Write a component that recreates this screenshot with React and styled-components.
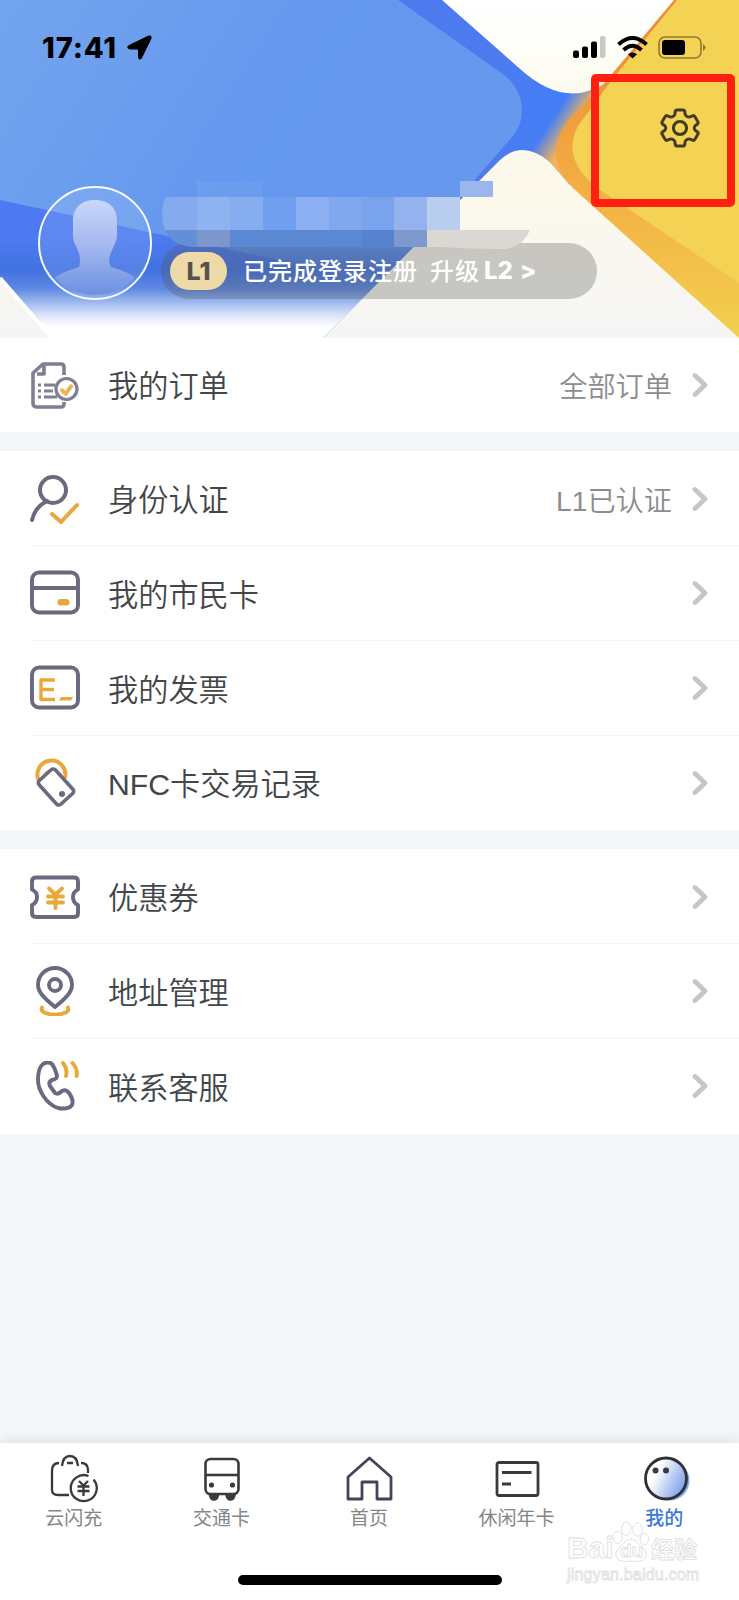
import React from 'react';
import styled, {createGlobalStyle} from 'styled-components';


const GlobalStyle = createGlobalStyle`
    * {
      box-sizing: border-box;
    }
    body {
      margin: 0;
      background: #f5f6f8;
      font-family: "Liberation Sans", "Noto Sans CJK SC", sans-serif;
    }
`;

const GREY = '#69697f';
const ORANGE = '#e8a83c';
const DARK = '#3a3a3c';


/* header artwork */

const HeaderArt = () => (
    <Art viewBox="0 0 739 338">
      <defs>
        <linearGradient id="paper" x1="0" y1="0" x2="0" y2="1">
          <stop offset="0" stopColor="#ffffff" />
          <stop offset=".3" stopColor="#fdfbee" />
          <stop offset=".6" stopColor="#fbf8eb" />
          <stop offset="1" stopColor="#f5f5f5" />
        </linearGradient>
        <linearGradient id="deep" x1="0" y1="0" x2="1" y2="0">
          <stop offset="0" stopColor="#4d7af0" />
          <stop offset=".8" stopColor="#4d7bef" />
          <stop offset=".92" stopColor="#417ffb" />
          <stop offset="1" stopColor="#4282f8" />
        </linearGradient>
        <linearGradient id="sky" x1="0" y1="0" x2="1" y2=".35">
          <stop offset="0" stopColor="#73a5ee" />
          <stop offset=".6" stopColor="#6497ee" />
          <stop offset="1" stopColor="#6698ee" />
        </linearGradient>
        <linearGradient id="fade" x1="0" y1="0" x2="0" y2="1">
          <stop offset="0" stopColor="#3c6fe0" stopOpacity="0" />
          <stop offset=".3" stopColor="#3f70dd" stopOpacity=".8" />
          <stop offset=".5" stopColor="#5f8ae2" />
          <stop offset=".75" stopColor="#d3dff7" />
          <stop offset=".88" stopColor="#ffffff" />
        </linearGradient>
        <linearGradient id="orange" x1="0" y1="0" x2="0" y2="1">
          <stop offset="0" stopColor="#ef8a35" />
          <stop offset=".3" stopColor="#f09a3c" />
          <stop offset=".6" stopColor="#f3b245" />
          <stop offset="1" stopColor="#f2d04e" />
        </linearGradient>
        <linearGradient id="glow" gradientUnits="userSpaceOnUse" x1="546" y1="128" x2="566" y2="141">
          <stop offset="0" stopColor="#f3b45a" stopOpacity="0" />
          <stop offset="1" stopColor="#f3b45a" />
        </linearGradient>
        <clipPath id="deepClip">
          <path d="M0 0H442L519 68Q567 112 610 80L570 185L550 162Q522 139 500 160L323 338H52L0 278Z" />
        </clipPath>
      </defs>
      <rect width="739" height="338" fill="url(#paper)" />
      <g clipPath="url(#deepClip)">
        <rect width="620" height="338" fill="url(#deep)" />
        <path d="M0 0H398L500 72Q526 90 521 120Q518 132 504 146L474 181L390 284L0 200Z" fill="url(#sky)" />
        <rect y="240" width="480" height="98" fill="url(#fade)" />
        <path d="M525 180V110L600 70L615 80V200Z" fill="url(#glow)" />
      </g>
      <path d="M0 278L52 338" stroke="#fff" strokeWidth="4" />
      <path d="M674 0H739V338L574 189Q540 155 570 118Q585 104 606 81Z" fill="url(#orange)" />
      <path d="M677 0H739V283L600 190Q560 160 578 126L611 81Z" fill="#f4d254" />
    </Art>
);

const tiles = [
    [197, 181, 66, 16, '#fff', .05],
    [460, 181, 33, 16, '#9bb5ed', 1],
    [160, 197, 37, 33, '#86aaee', 1],
    [197, 197, 33, 33, '#8fb3f0', 1],
    [230, 197, 33, 33, '#86adf0', 1],
    [263, 197, 33, 33, '#719ff0', 1],
    [296, 197, 33, 33, '#8cb0f1', 1],
    [329, 197, 33, 33, '#7fa8ef', 1],
    [362, 197, 32, 33, '#79a3ed', 1],
    [394, 197, 33, 33, '#94b3ee', 1],
    [427, 197, 33, 33, '#b9cdee', 1],
    [160, 230, 37, 17, '#648fd7', 1],
    [197, 230, 33, 17, '#7c97cc', 1],
    [230, 230, 132, 17, '#5a88d3', 1],
    [362, 230, 32, 17, '#5583cf', 1],
    [394, 230, 33, 17, '#7d99cd', 1],
    [427, 230, 110, 20, '#d9d8d3', 1],
];

const NameMosaic = () => (
    <Mosaic viewBox="160 181 378 70">
      <clipPath id="name">
        <path d="M193 181H538L530 230Q521 250 500 249Q470 249 440 247H192Q162 244 162 214Q163 182 193 181Z" />
      </clipPath>
      <g clipPath="url(#name)">
        {tiles.map(([x, y, w, h, fill, opacity]) =>
          <rect key={x + '-' + y} x={x} y={y} width={w} height={h} fill={fill} opacity={opacity} />
        )}
      </g>
    </Mosaic>
);

const Avatar = () => (
    <AvatarSvg viewBox="0 0 114 114">
      <defs>
        <linearGradient id="person" x1="0" y1="0" x2="0" y2="1">
          <stop offset="0" stopColor="#c9d6f8" />
          <stop offset=".5" stopColor="#a3b7ee" />
          <stop offset="1" stopColor="#6d90e0" />
        </linearGradient>
      </defs>
      <circle cx="57" cy="57" r="56" fill="#fff" fillOpacity=".1" />
      <path d="M57 14C73 14 80 24 79 38C79 50 80 52 75 62C71 70 70 76 73 81C82 84 91 86 97 92A56 56 0 0 1 17 92C23 86 33 84 41 81C43 74 42 68 38 60C34 54 35 48 35 38C34 22 43 14 57 14Z" fill="url(#person)" />
      <circle cx="57" cy="57" r="56" fill="none" stroke="#f4fbff" strokeWidth="2" />
    </AvatarSvg>
);

const GearIcon = () => (
    <Gear viewBox="0 0 40 40" fill="none" stroke="#403c22" strokeWidth="3" strokeLinejoin="round">
      <path d="M16.500 2H23.500Q24.500 2 24.800 3.500L25 6Q25.300 7.500 27 8.500Q28.500 9.300 30 8.800L32.500 7.800Q34 7.200 34.800 8.500L38 14Q38.500 15.200 37.500 16L35.500 17.500Q34.300 18.500 34.300 20Q34.300 21.500 35.500 22.500L37.500 24Q38.500 24.800 38 26L34.800 31.500Q34 32.800 32.500 32.200L30 31.200Q28.500 30.700 27 31.500Q25.300 32.500 25 34L24.800 36.500Q24.500 38 23.500 38H16.500Q15.500 38 15.200 36.500L15 34Q14.700 32.500 13 31.500Q11.500 30.700 10 31.200L7.500 32.200Q6 32.800 5.200 31.500L2 26Q1.500 24.800 2.500 24L4.500 22.500Q5.700 21.500 5.700 20Q5.700 18.500 4.500 17.500L2.500 16Q1.500 15.200 2 14L5.200 8.500Q6 7.200 7.500 7.800L10 8.800Q11.500 9.300 13 8.500Q14.700 7.500 15 6L15.200 3.500Q15.500 2 16.500 2Z" />
      <circle cx="20" cy="20" r="6.600" />
    </Gear>
);


/* row icons */

const icons = {
    order: <g opacity=".85">
      <path d="M34 15V7Q34 4 31 4H13L3 13V43Q3 47 7 47H31Q34 47 34 44V42M14 5V14H7" stroke={GREY} strokeWidth="3.600" />
      <path d="M8 25H11M14 25H25M8 31H11M14 31H23M8 37H11M14 37H27" stroke={GREY} strokeWidth="3.200" />
      <circle cx="36.500" cy="29" r="10.5" stroke={GREY} strokeWidth="3.200" />
      <path d="M31 29L35.500 34L42 25" stroke={ORANGE} />
    </g>,
    identity: <g>
      <circle cx="23" cy="16" r="13" stroke={GREY} strokeWidth="4" />
      <path d="M17 27Q5 33 2 46" stroke={GREY} strokeWidth="4" strokeLinecap="round" />
      <path d="M22 40L31 48L47 31" stroke={ORANGE} strokeWidth="4" strokeLinecap="round" />
    </g>,
    card: <g>
      <rect x="2" y="4.500" width="46" height="40" rx="7" stroke={GREY} />
      <path d="M2 20H48" stroke={GREY} />
      <rect x="27.500" y="31" width="12" height="6.5" rx="3" fill={ORANGE} />
    </g>,
    invoice: <g>
      <rect x="2" y="4.500" width="46" height="40" rx="7" stroke={GREY} />
      <path d="M25 17H11V36.500H25M11 26.500H24" stroke={ORANGE} strokeWidth="3.400" />
      <path d="M31 34H43L41 37.500H29Z" fill={ORANGE} />
    </g>,
    nfc: <g>
      <path d="M9 23A14 14 0 1 1 35 20" stroke={ORANGE} strokeWidth="4" />
      <path d="M14 19A8.5 8.5 0 0 1 28 15" stroke={ORANGE} strokeWidth="3" />
      <rect x="-16" y="-11" width="32" height="22" rx="3" transform="translate(26 29) rotate(48)" fill="#fff" stroke={GREY} strokeWidth="3.600" />
      <circle cx="32" cy="36" r="3" fill={GREY} />
    </g>,
    coupon: <g>
      <path d="M6 5.500H44Q48 5.500 48 9.500V17.500A8.5 8.5 0 0 0 48 33V41Q48 45 44 45H6Q2 45 2 41V33A8.5 8.5 0 0 0 2 17.500V9.500Q2 5.500 6 5.500Z" stroke={GREY} />
      <path d="M19 16.500L25.500 22.500L32 16.500M18 24.500H33M18 30.500H33M25.500 22.500V36" stroke={ORANGE} strokeLinecap="round" />
    </g>,
    address: <g>
      <path d="M25 41C14 32 8 26 8 19A17 17 0 0 1 42 19C42 26 36 32 25 41Z" stroke={GREY} />
      <circle cx="25" cy="19" r="6" stroke={GREY} />
      <path d="M12 41.500C8 51 42 51 38 41.500" stroke={ORANGE} strokeLinecap="round" />
    </g>,
    service: <g>
      <path d="M13 3Q18 0 22 3Q25 7 27 15Q27 18 22 19Q18 21 20 25L25 32Q28 34 32 30Q36 28 39 32Q44 39 42 44Q38 49 28 47C16 43 8 29 8 19Q8 7 13 3Z" stroke={GREY} />
      <path d="M33 2Q38 8 36 15M42.500 2Q48 8 46.500 15" stroke={ORANGE} strokeLinecap="round" />
    </g>,
};

const sections = [
    [{icon: 'order', label: '我的订单', value: '全部订单'}],
    [
      {icon: 'identity', label: '身份认证', value: 'L1已认证'},
      {icon: 'card', label: '我的市民卡'},
      {icon: 'invoice', label: '我的发票'},
      {icon: 'nfc', label: 'NFC卡交易记录'},
    ],
    [
      {icon: 'coupon', label: '优惠券'},
      {icon: 'address', label: '地址管理'},
      {icon: 'service', label: '联系客服'},
    ],
];


/* tab icons */

const tabs = [
    {label: '云闪充', icon: <g stroke={DARK} strokeWidth="2.300">
      <path d="M9 9Q2 9 2 17V36Q2 41 8 41H19M31 9Q38 9 38 16V19" />
      <path d="M12 12Q13 2 20 2Q27 2 28 12M17 9H23" />
      <path d="M43.500 25.500A13 13 0 1 1 38.500 22" />
      <path d="M29 27L33.500 31.500L38 27M27.500 32.500H39.500M27.500 37H39.500M33.500 31.500V42" />
    </g>},
    {label: '交通卡', icon: <g stroke={DARK} strokeWidth="2.600">
      <rect x="7.500" y="5" width="33" height="35" rx="5" />
      <path d="M8 21H40" />
      <circle cx="13.500" cy="31" r="2.600" fill={DARK} stroke="none" />
      <circle cx="34.500" cy="31" r="2.600" fill={DARK} stroke="none" />
      <path d="M12 41H20Q19 45.500 16 45.500Q13 45.500 12 41ZM28.500 41H36.500Q35.500 45.500 32.500 45.500Q29.500 45.500 28.500 41Z" fill={DARK} />
    </g>},
    {label: '首页', icon: <path d="M3 45V23L24.500 4L46 23V45H32V28H17V45Z" stroke="#424459" strokeWidth="2.800" />},
    {label: '休闲年卡', icon: <g stroke={DARK} strokeWidth="2.800">
      <rect x="4" y="8.500" width="41" height="33" rx="2" />
      <path d="M9 18.500H38.500M9 30H18" />
    </g>},
    {label: '我的', active: true, icon: <g>
      <defs>
        <linearGradient id="face" x1="0" y1="0" x2="1" y2=".5">
          <stop offset=".35" stopColor="#fff" />
          <stop offset="1" stopColor="#86a6ec" />
        </linearGradient>
      </defs>
      <circle cx="28.500" cy="26.500" r="20" fill="#88aaf0" />
      <circle cx="25" cy="24.500" r="20.500" fill="url(#face)" stroke="#303034" strokeWidth="2.800" />
      <circle cx="14.500" cy="16.500" r="3" fill={DARK} />
      <circle cx="25" cy="16.500" r="3" fill={DARK} />
    </g>},
];


export default () => {
    return(
        <Page>
            <GlobalStyle />
            <Header>
              <HeaderArt />
              <StatusBar>
                <Clock>17:41</Clock>
                <svg width="25" height="25" viewBox="0 0 25 25">
                  <path d="M2 10L21 .8Q25.500 -.5 24.300 4L15 23Q12 27 11 22V15Q11 14.500 10 14.500H3Q-2 13 2 10Z" />
                </svg>
                <StatusIcons>
                  <svg width="33" height="22" viewBox="0 0 33 22">
                    <rect y="14.500" width="6" height="7.500" rx="2" />
                    <rect x="9" y="10.500" width="6" height="11.500" rx="2" />
                    <rect x="18" y="5.500" width="6" height="16.500" rx="2" />
                    <rect x="27" y="0" width="5.500" height="22" rx="2" fill="#c9c8c1" />
                  </svg>
                  <svg width="31" height="23" viewBox="0 0 31 23" fill="none" stroke="#000" strokeWidth="4">
                    <path d="M1.500 8.500Q15.500-4.500 29.500 8.500M6.500 14Q15.500 5.500 24.500 14" />
                    <path d="M11 18.300Q15.500 14.800 20 18.300L15.500 22.500Z" fill="#000" stroke="none" />
                  </svg>
                  <svg width="48" height="23" viewBox="0 0 48 23">
                    <rect x="1" y="1" width="42" height="21" rx="6" fill="none" stroke="#8c7a35" strokeWidth="1.600" />
                    <rect x="4" y="4" width="23" height="15" rx="3" />
                    <path d="M45 8Q50 11.500 45 15Z" fill="#8c7a35" />
                  </svg>
                </StatusIcons>
              </StatusBar>
              <Profile>
                <Avatar />
                <ProfileInfo>
                  <NameMosaic />
                  <LevelPill>
                    <Level>L1</Level>
                    <LevelText>已完成登录注册</LevelText>
                    <LevelText>升级</LevelText>
                    <LevelLatin>L2</LevelLatin>
                    <LevelLatin>&gt;</LevelLatin>
                  </LevelPill>
                </ProfileInfo>
              </Profile>
              <Highlight><GearIcon /></Highlight>
            </Header>

            <Menu>
              {sections.map((rows, index) => <Section key={index}>
                {rows.map(row => <Row key={row.label}>
                  <RowIcon viewBox="0 0 50 50">{icons[row.icon]}</RowIcon>
                  <RowBody>
                    <Label>{row.label}</Label>
                    <Value>{row.value}</Value>
                    <Chevron viewBox="0 0 16 26"><path d="M3 3.500L13 13L3 22.500" /></Chevron>
                  </RowBody>
                </Row>)}
              </Section>)}
            </Menu>

            <TabBar>
              <Tabs>
                {tabs.map(tab => <Tab key={tab.label} $active={tab.active}>
                  <TabIcon viewBox="0 0 49 49">{tab.icon}</TabIcon>
                  {tab.label}
                </Tab>)}
              </Tabs>
              <HomeIndicator />
              <Watermark>
                <Brand>
                  <Bai>Bai</Bai>
                  <Paw viewBox="0 0 40 44">
                    <ellipse cx="6" cy="17" rx="5" ry="6.500" />
                    <ellipse cx="15" cy="8" rx="5" ry="7" />
                    <ellipse cx="27" cy="9" rx="5" ry="7" />
                    <ellipse cx="34" cy="19" rx="4.500" ry="6" />
                    <path d="M20 19Q25 19 29 25Q39 33 35 39Q32 44 20 42Q8 44 5 39Q1 33 11 25Q15 19 20 19Z" />
                  </Paw>
                  <Du>du</Du>
                  <Jingyan>经验</Jingyan>
                </Brand>
                <Site>jingyan.baidu.com</Site>
              </Watermark>
            </TabBar>
        </Page>
    );
};


const Page = styled.div`
    width: 739px;
    height: 1600px;
    display: flex;
    flex-direction: column;
    background: #f5f6f8;
    overflow: hidden;
`;

const Header = styled.header`
    position: relative;
    height: 337.600px;
    flex: none;
    isolation: isolate;
`;

const Art = styled.svg`
    position: absolute;
    top: 0;
    left: 0;
    width: 739px;
    height: 338px;
    z-index: -1;
`;

const StatusBar = styled.div`
    height: 94px;
    padding: 0 33px 0 42px;
    display: flex;
    align-items: center;
`;

const Clock = styled.span`
    width: 85px;
    font-family: Inter, sans-serif;
    font-weight: 800;
    font-size: 29px;
    letter-spacing: .9px;
`;

const StatusIcons = styled.div`
    display: flex;
    align-items: center;
    gap: 10.500px;
    margin-left: auto;
`;

const Profile = styled.div`
    display: flex;
    padding: 87px 0 0 38px;
`;

const AvatarSvg = styled.svg`
    width: 114px;
    height: 114px;
    margin-top: 5px;
    flex: none;
`;

const ProfileInfo = styled.div`
    margin-left: 9px;
`;

const Mosaic = styled.svg`
    display: block;
    position: relative;
    width: 378px;
    height: 70px;
    margin: 0 0 -8px -1px;
    z-index: 1;
`;

const LevelPill = styled.div`
    width: 436px;
    height: 56px;
    border-radius: 28px;
    padding: 0 0 1px 9px;
    display: flex;
    align-items: center;
    background: rgba(85, 85, 85, .3);
    color: #fff;
`;

const Level = styled.span`
    width: 57px;
    height: 38px;
    margin-right: 16px;
    border-radius: 19px;
    background: #eed9a8;
    color: #55524c;
    font: 800 25px/38px Inter, sans-serif;
    text-align: center;
`;

const LevelText = styled.span`
    font-family: "Noto Sans CJK SC", sans-serif;
    font-weight: 500;
    font-size: 24px;
    line-height: 34px;
    letter-spacing: 1px;
    margin: -2px 12px 0 0;
    & + & {
      margin-right: 4px;
    }
`;

const LevelLatin = styled.span`
    font-family: Inter, sans-serif;
    font-weight: 800;
    font-size: 24px;
    margin-right: 7px;
`;

const Highlight = styled.div`
    position: absolute;
    top: 74px;
    left: 591px;
    width: 144px;
    height: 133px;
    border: 8px solid #ff2011;
    border-radius: 5px;
    padding: 26px 0 0 61px;
`;

const Gear = styled.svg`
    display: block;
    width: 40px;
    height: 40px;
`;

const Menu = styled.main`
    flex: 1;
    display: flex;
    flex-direction: column;
    gap: 18.800px;
`;

const Section = styled.section`
    background: #fff;
`;

const Row = styled.div`
    height: 94.800px;
    padding-left: 30px;
    display: flex;
    align-items: center;
    background: linear-gradient(#f6f6f6, #f6f6f6) 30px 100% / 100% 1px no-repeat;
    &:last-child {
      background: none;
    }
`;

const RowIcon = styled.svg`
    width: 50px;
    height: 50px;
    flex: none;
    fill: none;
    stroke-width: 3.9;
    stroke-linejoin: round;
`;

const RowBody = styled.div`
    flex: 1;
    display: flex;
    align-items: center;
    margin-left: 28px;
    padding-right: 31px;
`;

const Label = styled.span`
    flex: 1;
    margin-top: -1px;
    font-size: 30.2px;
    font-weight: 350;
    color: #42464a;
`;

const Value = styled.span`
    margin: -1px 20px 0 0;
    font-size: 28.200px;
    font-weight: 350;
    color: #8c8c8c;
`;

const Chevron = styled.svg`
    width: 16px;
    height: 26px;
    fill: none;
    stroke: #c6c6c6;
    stroke-width: 4.8;
    stroke-linecap: round;
    stroke-linejoin: round;
`;

const TabBar = styled.footer`
    position: relative;
    height: 157px;
    flex: none;
    background: #fff;
    box-shadow: 0 -2px 14px rgba(0, 0, 0, .1);
`;

const Tabs = styled.div`
    display: flex;
    padding: 11px 1px 0 0;
`;

const Tab = styled.div`
    flex: 1;
    display: flex;
    flex-direction: column;
    align-items: center;
    font: ${props => props.$active ? 500 : 400} 19px/28px "Noto Sans CJK SC", sans-serif;
    color: ${props => props.$active ? '#3b78dc' : '#858585'};
`;

const TabIcon = styled.svg`
    width: 49px;
    height: 49px;
    margin-left: 2px;
    fill: none;
    stroke-linejoin: round;
`;

const HomeIndicator = styled.div`
    width: 264px;
    height: 10px;
    margin: 44px auto 0;
    border-radius: 5px;
    background: #000;
`;

const Watermark = styled.div`
    position: absolute;
    left: 567px;
    top: 75px;
    width: 140px;
    color: #fff;
    -webkit-text-stroke: .8px #dedede;
`;

const Brand = styled.div`
    display: flex;
    align-items: flex-end;
    height: 46px;
    font: 700 30px/30px "Liberation Sans", sans-serif;
`;

const Bai = styled.span`
    width: 45px;
    padding-bottom: 1px;
`;

const Paw = styled.svg`
    width: 38px;
    height: 44px;
    fill: #fff;
    stroke: #dedede;
    stroke-width: 1;
`;

const Du = styled.span`
    width: 24px;
    margin: 0 7px 0 -30px;
    font-size: 19px;
    line-height: 27px;
`;

const Jingyan = styled.span`
    font: 700 23px/32px "Noto Sans CJK SC", sans-serif;
`;

const Site = styled.div`
    font-size: 16px;
    line-height: 21px;
    letter-spacing: .2px;
`;
